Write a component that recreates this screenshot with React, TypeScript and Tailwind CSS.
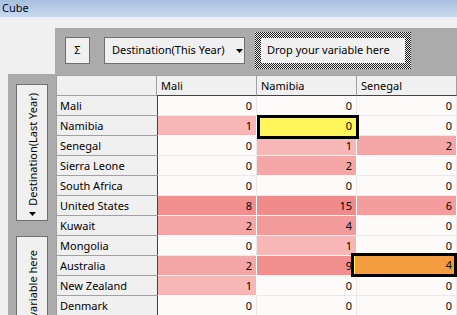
import React from 'react';

type Row = { name: string; values: number[] };

const rows: Row[] = [
  { name: 'Mali', values: [0, 0, 0] },
  { name: 'Namibia', values: [1, 0, 0] },
  { name: 'Senegal', values: [0, 1, 2] },
  { name: 'Sierra Leone', values: [0, 2, 0] },
  { name: 'South Africa', values: [0, 0, 0] },
  { name: 'United States', values: [8, 15, 6] },
  { name: 'Kuwait', values: [2, 4, 0] },
  { name: 'Mongolia', values: [0, 1, 0] },
  { name: 'Australia', values: [2, 9, 4] },
  { name: 'New Zealand', values: [1, 0, 0] },
  { name: 'Denmark', values: [0, 0, 0] },
];

const columns = ['Mali', 'Namibia', 'Senegal'];

const heat: Record<number, string> = {
  0: 'bg-[#fdfafa] border-[#ebe8e8]',
  1: 'bg-[#f7b7b7] border-white',
  2: 'bg-[#f5a7a7] border-white',
  4: 'bg-[#f39b9b] border-white',
  6: 'bg-[#f49d9d] border-white',
  8: 'bg-[#f18f8f] border-white',
  9: 'bg-[#f18f8f] border-white',
  15: 'bg-[#f08b8b] border-white',
};

const DownArrow = ({ className = '' }: { className?: string }) => (
  <svg width="7" height="4" viewBox="0 0 7 4" className={className}>
    <path d="M0 0h7L3.5 4z" fill="#000" />
  </svg>
);

const DataCell = ({ value, first, mark }: { value: number; first: boolean; mark?: 'yellow' | 'orange' }) => (
  <div
    className={`relative w-[100px] h-full border-r border-b pr-[4px] text-right leading-[19px] ${heat[value]} ${
      first ? 'border-l border-l-[#e00000]' : ''
    }`}
  >
    {value}
    {mark === 'yellow' && (
      <div className="absolute z-10 -top-px left-0 w-[102px] h-[24px] border-[3px] border-black bg-[#fff65c] pr-[4px] text-right leading-[15px]">
        {value}
      </div>
    )}
    {mark === 'orange' && (
      <div className="absolute z-10 -top-[3px] -left-[6px] w-[106px] h-[24px] border-[3px] border-black bg-[#f39c40] pr-[2px] text-right leading-[17px]">
        <div className="absolute left-0 top-0 bottom-0 w-px bg-[#fff65c]" />
        {value}
      </div>
    )}
  </div>
);

export default function App() {
  return (
    <div className="w-[457px] h-[315px] overflow-hidden bg-[#f0f0f0] text-black text-[11px] font-['Noto_Sans',sans-serif] flex flex-col">
      <div className="h-[17px] shrink-0 bg-gradient-to-b from-[#a6c0df] to-[#c8d9ee] pl-[2px] leading-[16px] text-[#000820]">
        Cube
      </div>

      <div className="flex-1 min-h-0 grid grid-cols-[56px_1fr] grid-rows-[58px_1fr]">
        <div />

        <div className="pt-[11px]">
          <div className="h-[47px] -ml-px bg-[#ababab] flex items-start pl-[10px]">
            <div className="mt-[9px] w-[25px] h-[27px] border border-[#6f6f6f] bg-[#f0f0f0] flex items-center justify-center">
              Σ
            </div>
            <div className="mt-[9px] ml-[14px] w-[141px] h-[27px] border border-[#6f6f6f] bg-[#f0f0f0] flex items-center justify-between pl-[7px] pr-[1px]">
              <span>Destination(This Year)</span>
              <DownArrow />
            </div>
            <div className="mt-[4px] ml-[10px] w-[156px] h-[37px] p-[6px] bg-[repeating-conic-gradient(#1a1a1a_0_25%,#f0f0f0_0_50%)] bg-[length:2px_2px]">
              <div className="h-full bg-[#f0f0f0] flex items-center pl-[6px]">Drop your variable here</div>
            </div>
          </div>
        </div>

        <div className="pl-[8px] -mt-px min-h-0 overflow-hidden">
          <div className="h-[300px] bg-[#ababab] pt-[10px] pl-[8px] flex flex-col gap-[15px]">
            <div className="w-[32px] h-[137px] shrink-0 border border-[#6f6f6f] bg-[#f0f0f0] flex flex-col items-center justify-end pb-[4px]">
              <span className="[writing-mode:vertical-rl] rotate-180 leading-[13px]">Destination(Last Year)</span>
              <DownArrow className="mt-[6px] ml-px" />
            </div>
            <div className="w-[32px] h-[150px] shrink-0 border border-[#6f6f6f] bg-[#f0f0f0] flex flex-col items-center justify-start pt-[13px]">
              <span className="[writing-mode:vertical-rl] rotate-180 leading-[13px] whitespace-nowrap">Drop your variable here</span>
            </div>
          </div>
        </div>

        <div className="min-h-0 overflow-hidden">
          <div className="flex h-[21px]">
            <div className="w-[101px] h-full border border-[#a0a0a0] bg-[#f0f0f0]" />
            {columns.map((c) => (
              <div
                key={c}
                className="w-[100px] h-full border-t border-r border-t-[#a0a0a0] border-r-[#a0a0a0] border-b border-b-[#e00000] bg-[#f0f0f0] pl-[4px] leading-[19px]"
              >
                {c}
              </div>
            ))}
          </div>
          {rows.map((r) => (
            <div key={r.name} className="flex h-[20px]">
              <div className="w-[101px] h-full border-l border-b border-[#a0a0a0] bg-[#f0f0f0] pl-[3px] leading-[19px]">
                {r.name}
              </div>
              {r.values.map((v, i) => (
                <DataCell
                  key={i}
                  value={v}
                  first={i === 0}
                  mark={
                    r.name === 'Namibia' && i === 1
                      ? 'yellow'
                      : r.name === 'Australia' && i === 2
                      ? 'orange'
                      : undefined
                  }
                />
              ))}
            </div>
          ))}
        </div>
      </div>
    </div>
  );
}
